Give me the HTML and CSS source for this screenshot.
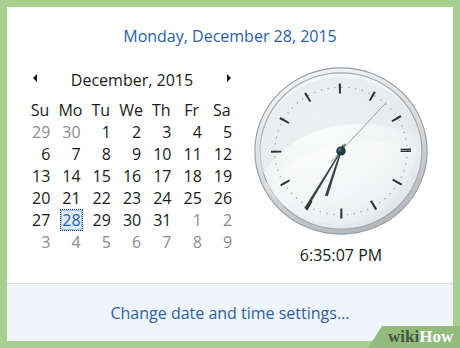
FILE: index.html
```html
<!DOCTYPE html>
<html>
<head>
<meta charset="utf-8">
<link rel="stylesheet" href="styles.css">
</head>
<body>
<div class="panel">
  <div class="main">
    <div class="title">Monday, December 28, 2015</div>
    <div class="content">
      <div class="cal">
        <div class="cal-head">
          <span class="arrow arrow-left"></span>
          <span class="month">December, 2015</span>
          <span class="arrow arrow-right"></span>
        </div>
        <div class="grid">
          <div class="dow">Su</div><div class="dow">Mo</div><div class="dow">Tu</div><div class="dow">We</div><div class="dow">Th</div><div class="dow">Fr</div><div class="dow">Sa</div>
          <div class="d other"><span>29</span></div><div class="d other"><span>30</span></div><div class="d"><span>1</span></div><div class="d"><span>2</span></div><div class="d"><span>3</span></div><div class="d"><span>4</span></div><div class="d"><span>5</span></div>
          <div class="d"><span>6</span></div><div class="d"><span>7</span></div><div class="d"><span>8</span></div><div class="d"><span>9</span></div><div class="d"><span>10</span></div><div class="d"><span>11</span></div><div class="d"><span>12</span></div>
          <div class="d"><span>13</span></div><div class="d"><span>14</span></div><div class="d"><span>15</span></div><div class="d"><span>16</span></div><div class="d"><span>17</span></div><div class="d"><span>18</span></div><div class="d"><span>19</span></div>
          <div class="d"><span>20</span></div><div class="d"><span>21</span></div><div class="d"><span>22</span></div><div class="d"><span>23</span></div><div class="d"><span>24</span></div><div class="d"><span>25</span></div><div class="d"><span>26</span></div>
          <div class="d"><span>27</span></div><div class="d sel"><span>28</span></div><div class="d"><span>29</span></div><div class="d"><span>30</span></div><div class="d"><span>31</span></div><div class="d other"><span>1</span></div><div class="d other"><span>2</span></div>
          <div class="d other"><span>3</span></div><div class="d other"><span>4</span></div><div class="d other"><span>5</span></div><div class="d other"><span>6</span></div><div class="d other"><span>7</span></div><div class="d other"><span>8</span></div><div class="d other"><span>9</span></div>
        </div>
      </div>
      <div class="clockcol">
        <svg class="clock" viewBox="-100 -100 200 200" preserveAspectRatio="none" xmlns="http://www.w3.org/2000/svg">
          <defs>
            <linearGradient id="rim" x1="0.2" y1="0" x2="0.6" y2="1">
              <stop offset="0" stop-color="#f6f7f8"/>
              <stop offset="0.55" stop-color="#d6d9dc"/>
              <stop offset="1" stop-color="#b3b8bd"/>
            </linearGradient>
            <radialGradient id="face" cx="0.35" cy="0.3" r="0.85">
              <stop offset="0" stop-color="#fcfdfd"/>
              <stop offset="0.6" stop-color="#f0f2f3"/>
              <stop offset="1" stop-color="#dde1e4"/>
            </radialGradient>
            <linearGradient id="gloss" x1="0" y1="0" x2="1" y2="1">
              <stop offset="0" stop-color="#ffffff" stop-opacity="0.9"/>
              <stop offset="1" stop-color="#ffffff" stop-opacity="0.2"/>
            </linearGradient>
          </defs>
          <circle r="99" fill="url(#rim)" stroke="#959ca2" stroke-width="1.3"/>
          <circle r="93" fill="url(#face)" stroke="#a3a9ae" stroke-width="1.3"/>
          <path d="M -91 30 C -60 -25 10 -50 91 -18 A 92 92 0 0 0 -91 30 Z" fill="#dfe4e7" opacity="0.5"/>
          <path d="M -88 40 C -50 -5 20 -20 88 -5 C 80 50 40 85 0 88 C -45 86 -80 60 -88 40 Z" fill="url(#gloss)" opacity="0.5"/>
          <circle r="76" fill="none" stroke="#a3abb0" stroke-width="1.8" stroke-linecap="round" stroke-dasharray="0.01 7.958"/>
          <circle r="74.5" fill="none" stroke="#2b3338" stroke-width="12" stroke-dasharray="2.4 36.4" stroke-dashoffset="1.2"/>
          <polygon points="-0.7,8 0.7,8 1.8,-56 -1.8,-56" fill="#3a4348" transform="rotate(197.5)"/>
          <polygon points="-0.6,10 0.6,10 1.6,-80 -1.6,-80" fill="#3a4348" transform="rotate(210.7)"/>
          <line x1="0" y1="18" x2="0" y2="-78" stroke="#8d979d" stroke-width="1" transform="rotate(42)"/>
          <circle r="5.5" fill="#1f3d44"/>
          <circle cx="-1.5" cy="-1.5" r="2" fill="#4c6f76"/>
        </svg>
        <div class="time">6:35:07 PM</div>
      </div>
    </div>
  </div>
  <div class="footer"><span class="link">Change date and time settings...</span></div>
</div>
<div class="wm"><span class="wiki">wiki</span><span class="how">How</span></div>
</body>
</html>
```
FILE: styles.css
```css
html, body {
  margin: 0;
  padding: 0;
}
body {
  width: 460px;
  height: 348px;
  box-sizing: border-box;
  padding: 7px;
  background: #a7cf90;
  font-family: "Open Sans", "Noto Sans", sans-serif;
  position: relative;
  overflow: hidden;
}
.panel {
  width: 446px;
  height: 334px;
  background: #ffffff;
  display: flex;
  flex-direction: column;
}
.main {
  flex: 1;
  display: flex;
  flex-direction: column;
  padding-top: 18px;
}
.title {
  font-size: 16px;
  line-height: 22px;
  text-align: center;
  color: #2a5fa8;
}
.content {
  margin-top: 20px;
  display: flex;
  padding-left: 18px;
  gap: 17px;
}
.cal {
  width: 212px;
  padding-top: 2px;
  font-size: 16px;
  color: #1a1a1a;
}
.cal-head {
  display: flex;
  align-items: center;
  justify-content: space-between;
  height: 22px;
  line-height: 22px;
  margin-bottom: 8px;
  padding: 0 6px 0 8px;
}
.arrow {
  width: 0;
  height: 0;
  border-top: 4px solid transparent;
  border-bottom: 4px solid transparent;
  margin-top: -4px;
}
.arrow-left {
  border-right: 4px solid #111;
}
.arrow-right {
  border-left: 4px solid #111;
}
.month {
  line-height: 22px;
}
.grid {
  display: grid;
  grid-template-columns: repeat(7, 30.3px);
  grid-auto-rows: 22px;
  line-height: 22px;
}
.dow {
  text-align: center;
}
.d {
  text-align: right;
  padding-right: 3px;
}
.d span {
  display: inline-block;
  line-height: 20px;
  padding: 0 1px;
  border: 1px solid transparent;
  vertical-align: top;
}
.d.other {
  color: #8c8c8c;
}
.d.sel span {
  color: #2a5fa8;
  background: #dce9f8;
  border: 1px dotted #1f3f73;
  box-shadow: inset 0 0 0 1px #a9c6ea;
}
.clockcol {
  display: flex;
  flex-direction: column;
  align-items: center;
  width: 174px;
}
.clock {
  width: 174px;
  height: 168px;
  display: block;
}
.time {
  margin-top: 9px;
  font-size: 16px;
  line-height: 22px;
  color: #1a1a1a;
}
.footer {
  height: 57px;
  border-top: 1px solid #d6dbe3;
  background: #f0f4fb;
  display: flex;
  align-items: center;
  justify-content: center;
}
.link {
  font-size: 16px;
  line-height: 22px;
  color: #2a5fa8;
}
.wm {
  position: absolute;
  right: 0;
  bottom: 0;
  width: 92px;
  height: 22px;
  background: #93bb7c;
  clip-path: polygon(14px 0, 100% 0, 100% 100%, 0 100%);
  font-family: "Liberation Serif", serif;
  font-weight: bold;
  font-size: 17px;
  line-height: 22px;
  padding-left: 20px;
  box-sizing: border-box;
}
.wiki {
  color: #46553d;
}
.how {
  color: #ffffff;
}
```
